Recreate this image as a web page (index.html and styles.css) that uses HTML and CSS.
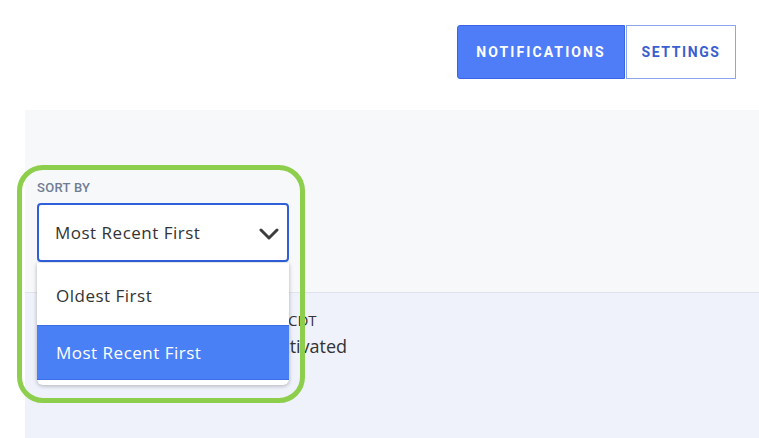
FILE: index.html
```html
<!DOCTYPE html>
<html lang="en">
<head>
    <meta charset="UTF-8">
    <meta name="viewport" content="width=device-width, initial-scale=1.0">
    <title>Notifications</title>
    <link rel="stylesheet" href="styles.css">
</head>
<body>
    <header class="top-bar">
        <nav class="tabs">
            <button class="tab active">Notifications</button>
            <button class="tab">Settings</button>
        </nav>
    </header>

    <main class="content">
        <section class="filter-panel">
            <div class="sort-field">
                <label class="sort-label">Sort by</label>
                <div class="select-wrap">
                    <div class="select">
                        <span>Most Recent First</span>
                        <svg class="chevron" width="20" height="12" viewBox="0 0 20 12">
                            <path d="M2 2 L10 10 L18 2" fill="none" stroke="#3d3d3d" stroke-width="3" stroke-linecap="round" stroke-linejoin="round"/>
                        </svg>
                    </div>
                    <ul class="options">
                        <li class="option">Oldest First</li>
                        <li class="option selected">Most Recent First</li>
                    </ul>
                </div>
            </div>
            <!-- callout ring around the sort control -->
            <div class="highlight"></div>
        </section>

        <section class="notification-list">
            <div class="notification">
                <p class="notification-date">1:00 PM CDT</p>
                <p class="notification-text">Now activated</p>
            </div>
        </section>
    </main>
</body>
</html>
```

FILE: styles.css
```css
* {
    box-sizing: border-box;
}
body {
    margin: 0;
    font-family: "Open Sans", "Noto Sans", sans-serif;
    color: #333;
    background: #fff;
    height: 438px;
    overflow: hidden;
}
.top-bar {
    display: flex;
    justify-content: flex-end;
    height: 110px;
    padding: 25px 23px 0 0;
}
.tabs {
    display: flex;
    height: 54px;
}
.tab {
    font-family: Roboto, sans-serif;
    font-weight: 700;
    font-size: 14px;
    letter-spacing: 1.6px;
    text-transform: uppercase;
    border: 1px solid #8ca6ee;
    background: #fff;
    color: #3a5fcf;
    width: 110px;
    padding: 0;
    margin: 0;
    cursor: pointer;
}
.tab.active {
    width: 168px;
    letter-spacing: 2.1px;
    background: #4f7cf7;
    border-color: #3a64e4;
    color: #fff;
    border-radius: 3px 0 0 3px;
    margin-right: 1px;
}
.content {
    margin-left: 25px;
}
.filter-panel {
    position: relative;
    height: 183px;
    background: #f7f8fa;
    border-bottom: 1px solid #dfe4ec;
    padding: 70px 0 0 12px;
}
.sort-label {
    display: block;
    font-family: Roboto, sans-serif;
    font-weight: 500;
    font-size: 13px;
    line-height: 16px;
    color: #6f7d94;
    text-transform: uppercase;
    letter-spacing: 0.3px;
    margin-bottom: 7px;
}
.select-wrap {
    position: relative;
    width: 252px;
}
.select {
    display: flex;
    align-items: center;
    justify-content: space-between;
    height: 59px;
    border: 2px solid #2f60da;
    border-radius: 4px;
    background: #fff;
    padding: 0 8px 0 16px;
    font-size: 17px;
    letter-spacing: 0.5px;
    color: #333;
}
.chevron {
    margin-top: 2px;
}
.options {
    position: absolute;
    top: calc(100% + 1px);
    left: 0;
    right: 0;
    margin: 0;
    padding: 0 0 5px;
    list-style: none;
    background: #fff;
    border-radius: 0 0 6px 6px;
    box-shadow: 0 1px 4px rgba(0, 0, 0, 0.28);
    z-index: 2;
}
.option {
    font-size: 17px;
    letter-spacing: 0.5px;
    padding: 0 19px;
    height: 62px;
    line-height: 66px;
    color: #333;
}
.option.selected {
    height: 55px;
    line-height: 53px;
    background: #4a80f6;
    border-top: 1px solid #3c6ee8;
    border-bottom: 1px solid #3c6ee8;
    color: #fff;
}
.highlight {
    position: absolute;
    left: -8px;
    top: 55px;
    width: 288px;
    height: 238px;
    border: 5px solid #8dcf4c;
    border-radius: 26px;
    pointer-events: none;
    z-index: 3;
}
.notification-list {
    background: #eff2fb;
    height: 146px;
    padding: 18px 0 0 203px;
}
.notification p {
    margin: 0;
}
.notification-date {
    font-size: 15px;
    line-height: 18px;
    text-transform: uppercase;
    color: #333;
}
.notification-text {
    margin-top: 6px !important;
    font-size: 18px;
    line-height: 22px;
    color: #333;
}
```
